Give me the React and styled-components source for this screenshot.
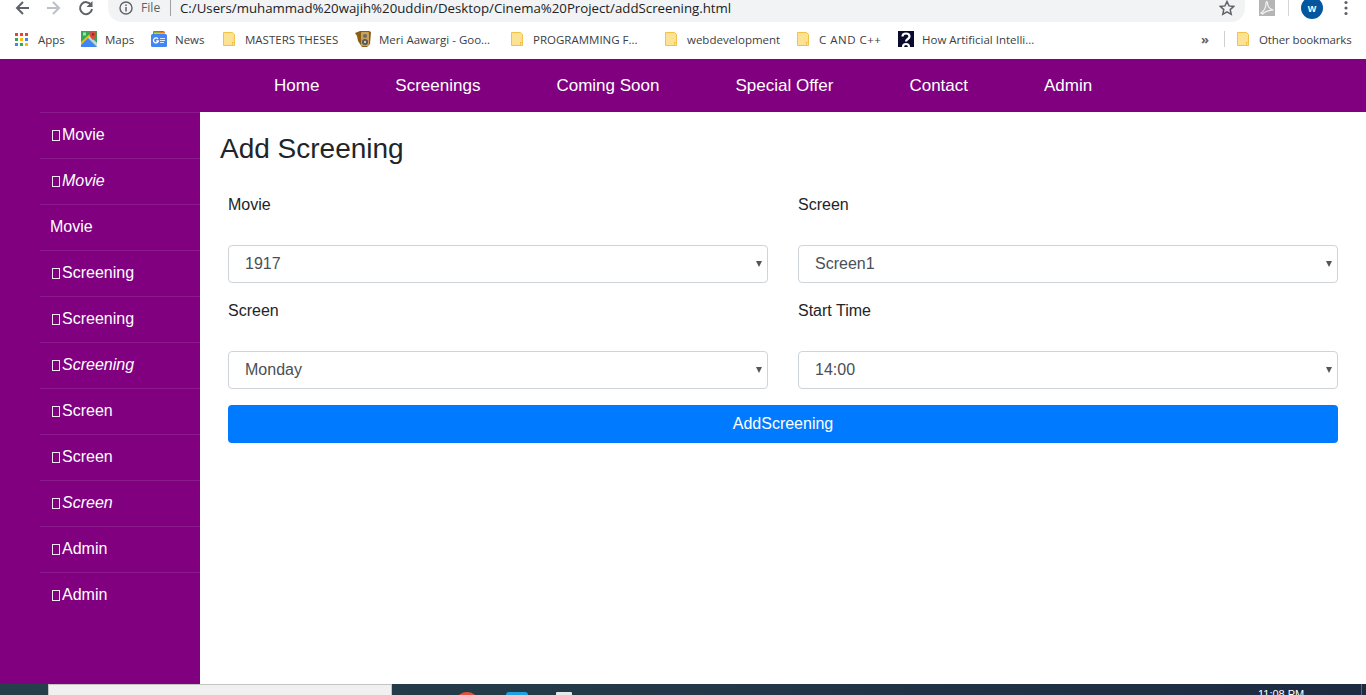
import React from "react";
import styled, { createGlobalStyle } from "styled-components";

const Global = createGlobalStyle`
  html, body { margin: 0; padding: 0; height: 100%; background: #fff; overflow: hidden; }
  * { box-sizing: border-box; }
`;

const Page = styled.div`
  width: 1366px; height: 695px; display: flex; flex-direction: column; overflow: hidden;
  font-family: "Liberation Sans", Arial, sans-serif; color: #212529;
`;

/* browser chrome */
const Toolbar = styled.div`
  height: 22px; flex: none; display: flex; align-items: flex-start; background: #fff; overflow: hidden;
`;
const NavIcon = styled.span`
  width: 16px; height: 16px; flex: none; margin-left: ${p => p.$ml}px; display: flex;
  color: ${p => p.$c || "#5f6368"};
`;
const Omnibox = styled.div`
  margin-left: 14px; width: 1137px; height: 22px; background: #f1f3f4; border-radius: 0 0 14px 14px;
  display: flex; align-items: flex-start; padding-left: 11px; flex: none;
  font-family: "Open Sans", "Noto Sans", sans-serif; font-size: 13.25px; line-height: 16px; color: #202124;
`;
const FileLabel = styled.span`
  margin-left: 8px; width: 29px; color: #5f6368; flex: none; font-size: 12.2px;
`;
const Divider = styled.span`
  width: 1px; height: 16px; background: #9aa0a6; flex: none; margin-right: 9px;
`;
const Url = styled.span`flex: 1; white-space: nowrap;`;
const Pdf = styled.span`
  margin-left: 14px; width: 16px; height: 16px; background: #b5b5b5; flex: none; display: flex; color: #f4f4f4;
`;
const ToolSep = styled.span`
  margin-left: 13px; width: 1px; height: 16px; background: #d5d6d8; flex: none;
`;
const Avatar = styled.span`
  margin: -3px 0 0 12px; width: 22px; height: 22px; border-radius: 50%; background: #04569f; color: #fff;
  font-size: 9px; font-weight: 700; display: flex; align-items: center; justify-content: center; flex: none;
  padding-top: 1px;
`;

const Bookmarks = styled.div`
  height: 37px; flex: none; background: #fff; display: flex; align-items: center;
  font-family: "Open Sans", "Noto Sans", sans-serif; font-size: 11.5px; color: #3c4043;
  padding-bottom: 3px;
`;
const Bookmark = styled.span`
  flex: none; width: ${p => p.$w}px; margin-left: ${p => p.$ml || 0}px; display: flex; align-items: center; white-space: nowrap; overflow: hidden;
  gap: ${p => p.$gap ?? 8}px; letter-spacing: ${p => p.$ls || 0}px;
`;
const BarSep = styled.span`
  flex: none; width: 1px; height: 16px; background: #cfd0d2; margin-left: 7px; margin-right: 12px;
`;
const Chevron = styled.span`
  flex: none; margin-left: 49px; width: 16px; color: #5f6368; font-size: 13px; font-weight: 700; line-height: 1;
`;

/* site */
const TopNav = styled.nav`
  height: 53px; flex: none; background: #800080; display: flex; align-items: center; padding-left: 236px;
`;
const NavLink = styled.a`
  padding: 0 38px; color: #fff; font-size: 17px; line-height: 53px; white-space: nowrap;
`;
const Body = styled.div`
  flex: 1; display: flex; min-height: 0;
`;
const Sidebar = styled.aside`
  width: 200px; flex: none; background: #800080; padding-left: 40px;
`;
const SideItem = styled.a`
  display: flex; align-items: center; height: 46px; color: #fff; font-size: 16px; padding-left: ${p => p.$bare ? 10 : 12}px;
  border-top: 1px solid #8c1a8c; font-style: ${p => p.$italic ? "italic" : "normal"}; padding-bottom: 1px;
`;
const Tofu = styled.span`
  width: 8px; height: 11px; border: 1px solid #fff; opacity: .9; flex: none; margin-right: 2px;
`;
const Main = styled.main`
  flex: 1; padding: 0 28px 0 20px; background: #fff;
`;
const Title = styled.h1`
  margin: 0; font-size: 28px; font-weight: 400; line-height: 34px; padding-top: 20px; color: #212529;
`;
const FormGrid = styled.form`
  margin: 27px 0 0 8px; display: grid; grid-template-columns: 540px 540px; column-gap: 30px; row-gap: 16px;
`;
const Field = styled.div`display: flex; flex-direction: column;`;
const Label = styled.label`
  font-size: 16px; line-height: 24px; height: 52px; display: block;
`;
const SelectWrap = styled.div`
  position: relative;
  &::after {
    content: ""; position: absolute; right: 6px; top: 16px; width: 0; height: 0;
    border-left: 3.5px solid transparent; border-right: 3.5px solid transparent; border-top: 6px solid #555;
  }
`;
const Select = styled.select`
  appearance: none; width: 100%; height: 38px; border: 1px solid #ced4da; border-radius: 4px; background: #fff;
  padding: 0 16px 2px 16px; color: #495057; font: 400 16px "Liberation Sans", Arial, sans-serif; outline: none;
`;
const Submit = styled.button`
  grid-column: 1 / 3; height: 38px; border: none; border-radius: 4px; background: #007bff; color: #fff;
  font: 400 16px "Liberation Sans", Arial, sans-serif; margin-top: 0;
`;

/* taskbar */
const Taskbar = styled.div`
  height: 11px; flex: none; display: flex; overflow: hidden; align-items: flex-start;
  background: linear-gradient(90deg, #25404a 0%, #233a48 40%, #1c2a42 100%);
`;
const TaskWindow = styled.div`
  margin-left: 48px; width: 344px; height: 11px; flex: none; background: #f0f0f0;
  border: 1px solid #c4c4c4; border-bottom: none;
`;
const TaskIcon = styled.span`
  flex: none; margin-left: ${p => p.$ml}px; margin-top: 8px; width: ${p => p.$w}px; height: 16px; background: ${p => p.$c};
  border-radius: ${p => p.$r};
`;
const Clock = styled.span`
  flex: none; margin-left: 686px; margin-top: 4px; font-size: 11px; line-height: 12px; color: #fff; white-space: nowrap; width: 103px;
`;
const TaskEdge = styled.span`flex: none; width: 1px; height: 11px; background: #5a6578;`;

const Folder = () => (
  <svg width="12" height="14" viewBox="0 0 12 14" style={{ flex: "none" }}>
    <path d="M.5.5h9l2 2v11H.5z" fill="#fde293" stroke="#f0c14b" />
    <rect x="9.5" y="10.5" width="2" height="3" fill="#fde293" stroke="#f0c14b" strokeWidth=".8" />
  </svg>
);

const AppsIcon = () => (
  <svg width="13" height="13" viewBox="0 0 13 13" style={{ flex: "none" }}>
    {[["#ea4335", "#ea4335", "#ea4335"], ["#34a853", "#fbbc05", "#4285f4"], ["#4285f4", "#34a853", "#fbbc05"]].map((row, y) =>
      row.map((c, x) => <rect key={x + "-" + y} x={x * 5} y={y * 5} width="3" height="3" fill={c} />)
    )}
  </svg>
);

const MapsIcon = () => (
  <svg width="16" height="16" viewBox="0 0 16 16" style={{ flex: "none" }}>
    <rect width="16" height="16" fill="#34a853" />
    <path d="M0 16V11L6 6l10 10z" fill="#4285f4" />
    <path d="M6 6L16 16V12L8.500 4.500z" fill="#c7d3e4" />
    <path d="M0 11L11 1h2L0 14z" fill="#fbbc05" />
    <rect x="2" y="1.500" width="3" height="3" fill="#a8dab5" />
    <path d="M12 0a3.400 3.400 0 0 1 3.400 3.400C15.400 6 12 9 12 9S8.600 6 8.600 3.400A3.400 3.400 0 0 1 12 0z" fill="#dd4b3e" />
    <circle cx="12" cy="3.400" r="1.200" fill="#802d25" />
  </svg>
);

const NewsIcon = () => (
  <svg width="16" height="16" viewBox="0 0 16 16" style={{ flex: "none" }}>
    <rect x="2" y="0" width="11" height="6" rx="1" fill="#34a853" />
    <rect x="8" y="0.500" width="6" height="6" rx="1" fill="#ea4335" />
    <rect x="3" y="1.500" width="11" height="4" fill="#fbbc05" />
    <rect y="3" width="16" height="13" rx="1.500" fill="#4285f4" />
    <path d="M7 8A2.500 2.500 0 1 0 7.400 10H5.200" fill="none" stroke="#fff" strokeWidth="1.300" />
    <path d="M9 7.500h5M9 9.500h5M9 11.500h4" stroke="#dce8fb" strokeWidth="1" />
  </svg>
);

const SpeakerIcon = () => (
  <svg width="17" height="18" viewBox="0 0 17 18" style={{ flex: "none" }}>
    <path d="M0 3l5-2h9l2 1-1 12-3 3H7L3 11 2 6z" fill="#8a5d14" />
    <rect x="6" y="2" width="8" height="14" rx="1" fill="#c9a15a" />
    <circle cx="10" cy="6" r="2" fill="#6b6b6b" />
    <circle cx="10" cy="12" r="3" fill="#555" />
    <circle cx="10" cy="12" r="1.200" fill="#cfcfcf" />
  </svg>
);

const QuoraIcon = () => (
  <svg width="16" height="16" viewBox="0 0 16 16" style={{ flex: "none" }}>
    <rect width="16" height="16" fill="#0b0b2b" />
    <path d="M4.500 5.500C4.500 3.500 6 2.500 8 2.500s3.500 1 3.500 3c0 2.500-3.500 2.500-3.500 5M5 16c0-2 1.300-3 3-3s3 1 3 3" fill="none" stroke="#fff" strokeWidth="2.200" />
  </svg>
);

const sideItems = [
  { t: "Movie", icon: true }, { t: "Movie", icon: true, italic: true }, { t: "Movie", bare: true },
  { t: "Screening", icon: true }, { t: "Screening", icon: true }, { t: "Screening", icon: true, italic: true },
  { t: "Screen", icon: true }, { t: "Screen", icon: true }, { t: "Screen", icon: true, italic: true },
  { t: "Admin", icon: true }, { t: "Admin", icon: true },
];

const navItems = ["Home", "Screenings", "Coming Soon", "Special Offer", "Contact", "Admin"];

const fields = [
  { label: "Movie", value: "1917" }, { label: "Screen", value: "Screen1" },
  { label: "Screen", value: "Monday" }, { label: "Start Time", value: "14:00" },
];

export default function App() {
  return (
    <Page>
      <Global />
      <Toolbar>
        <NavIcon $ml={14}>
          <svg width="16" height="16" viewBox="0 0 16 16"><path d="M15 8H3.500M9 2L3 8l6 6" fill="none" stroke="currentColor" strokeWidth="2" /></svg>
        </NavIcon>
        <NavIcon $ml={16} $c="#bdc1c6">
          <svg width="16" height="16" viewBox="0 0 16 16"><path d="M1 8h11.500M7 2l6 6-6 6" fill="none" stroke="currentColor" strokeWidth="2" /></svg>
        </NavIcon>
        <NavIcon $ml={16}>
          <svg width="16" height="16" viewBox="0 0 16 16"><path d="M13.200 5A6 6 0 1 0 14 9" fill="none" stroke="currentColor" strokeWidth="2" /><path d="M14.500 1v6h-6z" fill="currentColor" /></svg>
        </NavIcon>
        <Omnibox>
          <svg width="14" height="14" viewBox="0 0 14 14" style={{ flex: "none", marginTop: 1 }}>
            <circle cx="7" cy="7" r="6" fill="none" stroke="#5f6368" strokeWidth="1.400" />
            <path d="M7 6v4.400M7 3.400v1.500" stroke="#5f6368" strokeWidth="1.500" />
          </svg>
          <FileLabel>File</FileLabel>
          <Divider />
          <Url>C:/Users/muhammad%20wajih%20uddin/Desktop/Cinema%20Project/addScreening.html</Url>
          <svg width="16" height="16" viewBox="0 0 16 16" style={{ flex: "none", marginRight: 10 }}>
            <path d="M8 1.500l2 4.400 4.800.5-3.600 3.200 1 4.700L8 11.900l-4.200 2.400 1-4.700L1.200 6.400 6 5.900z" fill="none" stroke="#5f6368" strokeWidth="1.500" />
          </svg>
        </Omnibox>
        <Pdf>
          <svg width="16" height="16" viewBox="0 0 16 16"><path d="M2 13c3-2 5-6 5-10 0-2 1.500-2 1.500 0 0 3 2 6 6 7-4 0-8 1-11 4z" fill="none" stroke="currentColor" strokeWidth="1.200" /></svg>
        </Pdf>
        <ToolSep />
        <Avatar>W</Avatar>
        <NavIcon $ml={21}>
          <svg width="4" height="16" viewBox="0 0 4 16"><circle cx="2" cy="2.500" r="1.600" fill="currentColor" /><circle cx="2" cy="8" r="1.600" fill="currentColor" /><circle cx="2" cy="13.500" r="1.600" fill="currentColor" /></svg>
        </NavIcon>
      </Toolbar>
      <Bookmarks>
        <Bookmark $ml={15} $w={66} $gap={10}><AppsIcon />Apps</Bookmark>
        <Bookmark $w={70}><MapsIcon />Maps</Bookmark>
        <Bookmark $w={72}><NewsIcon />News</Bookmark>
        <Bookmark $w={132} $gap={10}><Folder />MASTERS THESES</Bookmark>
        <Bookmark $w={156} $gap={7}><SpeakerIcon />Meri Aawargi - Goo...</Bookmark>
        <Bookmark $w={154} $gap={10}><Folder />PROGRAMMING F...</Bookmark>
        <Bookmark $w={132} $gap={10}><Folder />webdevelopment</Bookmark>
        <Bookmark $w={101} $gap={10} $ls={0.5}><Folder />C AND C++</Bookmark>
        <Bookmark $w={254}><QuoraIcon />How Artificial Intelli...</Bookmark>
        <Chevron>»</Chevron>
        <BarSep />
        <Bookmark $w={120} $gap={10} $ls={-0.12}><Folder />Other bookmarks</Bookmark>
      </Bookmarks>
      <TopNav>
        {navItems.map(n => <NavLink key={n}>{n}</NavLink>)}
      </TopNav>
      <Body>
        <Sidebar>
          {sideItems.map((s, i) => (
            <SideItem key={i} $italic={s.italic} $bare={s.bare}>
              {s.icon && <Tofu />}{s.t}
            </SideItem>
          ))}
        </Sidebar>
        <Main>
          <Title>Add Screening</Title>
          <FormGrid>
            {fields.map((f, i) => (
              <Field key={i}>
                <Label>{f.label}</Label>
                <SelectWrap>
                  <Select defaultValue={f.value}><option>{f.value}</option></Select>
                </SelectWrap>
              </Field>
            ))}
            <Submit type="button">AddScreening</Submit>
          </FormGrid>
        </Main>
      </Body>
      <Taskbar>
        <TaskWindow />
        <TaskIcon $ml={65} $w={20} $c="#e5523f" $r="50%" />
        <TaskIcon $ml={29} $w={22} $c="#1da1e2" $r="3px" />
        <TaskIcon $ml={28} $w={16} $c="#e8e8e8" $r="1px" />
        <Clock>11:08 PM</Clock>
        <TaskEdge />
      </Taskbar>
    </Page>
  );
}
